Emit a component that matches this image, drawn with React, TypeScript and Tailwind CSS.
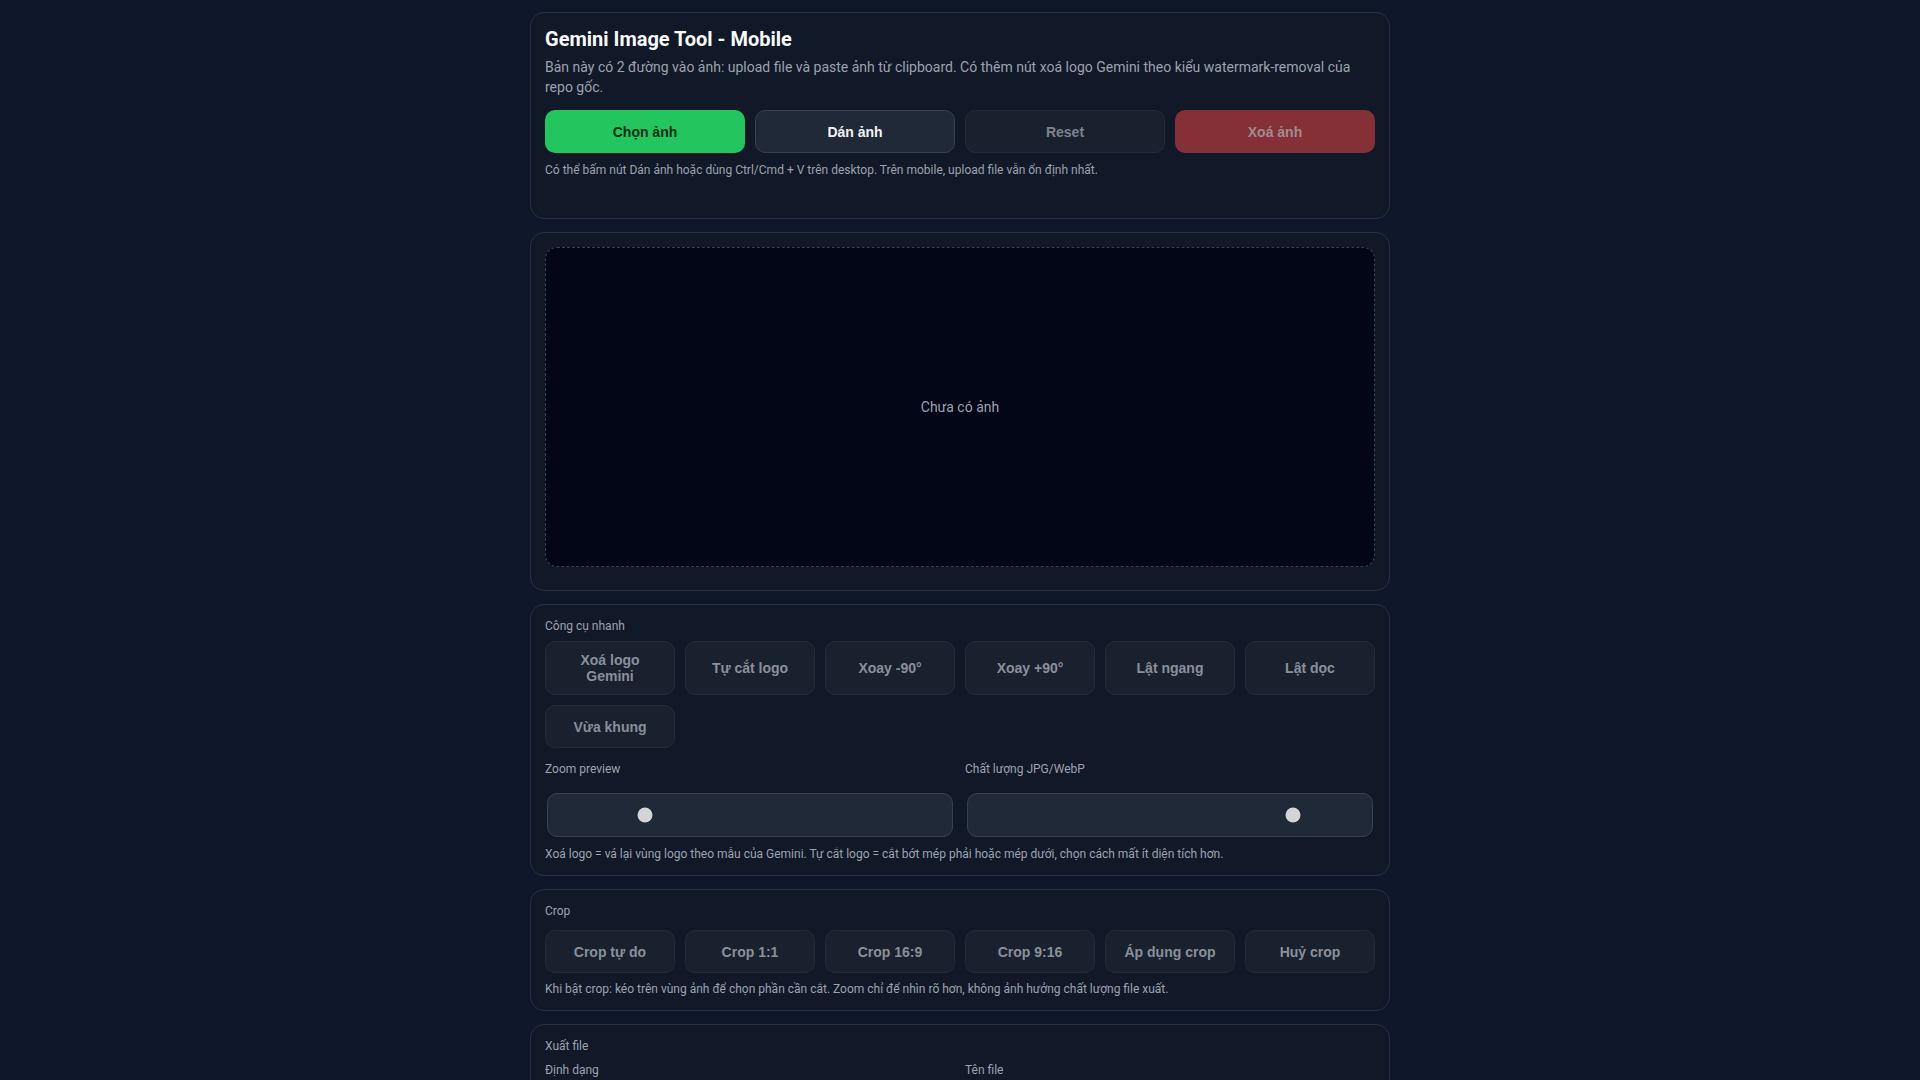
import { useState } from 'react'

const TOOLS = ['Xoá logo Gemini', 'Tự cắt logo', 'Xoay -90°', 'Xoay +90°', 'Lật ngang', 'Lật dọc', 'Vừa khung']
const CROPS = ['Crop tự do', 'Crop 1:1', 'Crop 16:9', 'Crop 9:16', 'Áp dụng crop', 'Huỷ crop']

const btnFont = { fontFamily: '"Liberation Sans", Arial, sans-serif' }

function Card({ children, className = '' }: { children: React.ReactNode; className?: string }) {
  return (
    <section className={`rounded-[14px] border border-[#283244] bg-[#111827] p-3.5 ${className}`}>
      {children}
    </section>
  )
}

function Label({ children, className = '' }: { children: React.ReactNode; className?: string }) {
  return <div className={`text-xs leading-[14px] text-[#9ca3af] ${className}`}>{children}</div>
}

function GhostButton({ label }: { label: string }) {
  return (
    <button
      disabled
      style={btnFont}
      className="min-h-[43px] rounded-[10px] border border-[#222b3a] bg-[#19212e] px-3 py-2.5 text-sm font-bold leading-4 text-[#8a909b]"
    >
      {label}
    </button>
  )
}

function Slider({ value }: { value: number }) {
  return (
    <div className="relative m-0.5 h-[44px] rounded-[10px] border border-[#374151] bg-[#1f2937]">
      {/* thumb */}
      <span
        className="absolute top-1/2 h-[15px] w-[15px] -translate-x-1/2 -translate-y-1/2 rounded-full bg-[#d4d4d6]"
        style={{ left: `${value}%` }}
      />
    </div>
  )
}

export default function App() {
  const [zoom] = useState(23.9)
  const [quality] = useState(80.5)

  return (
    <div
      className="min-h-screen bg-[#0f172a] pt-3 text-[#e5e7eb]"
      style={{ fontFamily: 'Roboto, "Noto Sans", sans-serif' }}
    >
      <div className="mx-auto flex max-w-[860px] flex-col gap-[13px]">
        {/* Header */}
        <Card>
          <h1 className="text-xl font-bold leading-6 text-[#f9fafb]">Gemini Image Tool - Mobile</h1>
          <p className="mt-1.5 text-sm leading-5 text-[#9ca3af]">
            Bản này có 2 đường vào ảnh: upload file và paste ảnh từ clipboard. Có thêm nút xoá logo Gemini theo kiểu
            watermark-removal của repo gốc.
          </p>
          <div className="mt-[13px] grid grid-cols-4 gap-2.5">
            <button
              style={btnFont}
              className="min-h-[43px] rounded-[10px] bg-[#22c55e] text-sm font-bold text-[#052e16]"
            >
              Chọn ảnh
            </button>
            <button
              style={btnFont}
              className="min-h-[43px] rounded-[10px] border border-[#374151] bg-[#1f2937] text-sm font-bold text-[#f3f4f6]"
            >
              Dán ảnh
            </button>
            <button
              disabled
              style={btnFont}
              className="min-h-[43px] rounded-[10px] border border-[#222b3a] bg-[#19212e] text-sm font-bold text-[#7d838e]"
            >
              Reset
            </button>
            <button
              disabled
              style={btnFont}
              className="min-h-[43px] rounded-[10px] bg-[#852f37] text-sm font-bold text-[#9d8d91]"
            >
              Xoá ảnh
            </button>
          </div>
          <Label className="mt-2.5">
            Có thể bấm nút Dán ảnh hoặc dùng Ctrl/Cmd + V trên desktop. Trên mobile, upload file vẫn ổn định nhất.
          </Label>
          <div className="mt-2.5 min-h-[17px]" />
        </Card>

        {/* Preview */}
        <Card>
          <div className="mb-[9px] flex h-[320px] items-center justify-center rounded-xl border border-dashed border-[#334155] bg-[#020617]">
            <span className="text-sm text-[#9ca3af]">Chưa có ảnh</span>
          </div>
        </Card>

        {/* Quick tools */}
        <Card>
          <Label className="mb-2">Công cụ nhanh</Label>
          <div className="grid grid-cols-6 gap-2.5">
            {TOOLS.map(t => (
              <GhostButton key={t} label={t} />
            ))}
          </div>
          <div className="mt-[14px] grid grid-cols-2 gap-2.5">
            <div>
              <Label className="mb-[17px]">Zoom preview</Label>
              <Slider value={zoom} />
            </div>
            <div>
              <Label className="mb-[17px]">Chất lượng JPG/WebP</Label>
              <Slider value={quality} />
            </div>
          </div>
          <Label className="mt-2">
            Xoá logo = vá lại vùng logo theo mẫu của Gemini. Tự cắt logo = cắt bớt mép phải hoặc mép dưới, chọn cách mất ít
            diện tích hơn.
          </Label>
        </Card>

        {/* Crop */}
        <Card>
          <Label className="mb-3">Crop</Label>
          <div className="grid grid-cols-6 gap-2.5">
            {CROPS.map(c => (
              <GhostButton key={c} label={c} />
            ))}
          </div>
          <Label className="mt-[9px]">
            Khi bật crop: kéo trên vùng ảnh để chọn phần cần cắt. Zoom chỉ để nhìn rõ hơn, không ảnh hưởng chất lượng file
            xuất.
          </Label>
        </Card>

        {/* Export */}
        <Card className="mb-6">
          <Label className="mb-2.5">Xuất file</Label>
          <div className="grid grid-cols-2 gap-2.5">
            <div>
              <Label className="mb-2">Định dạng</Label>
              <select
                className="h-[43px] w-full rounded-[10px] border border-[#374151] bg-[#1f2937] px-3 text-sm text-[#f3f4f6]"
                defaultValue="png"
              >
                <option value="png">PNG</option>
                <option value="jpg">JPG</option>
                <option value="webp">WebP</option>
              </select>
            </div>
            <div>
              <Label className="mb-2">Tên file</Label>
              <input
                className="h-[43px] w-full rounded-[10px] border border-[#374151] bg-[#1f2937] px-3 text-sm text-[#f3f4f6]"
                defaultValue="gemini-edited"
              />
            </div>
          </div>
          <button
            disabled
            style={btnFont}
            className="mt-2.5 min-h-[43px] w-full rounded-[10px] bg-[#15803d] text-sm font-bold text-[#052e16]"
          >
            Tải ảnh xuống
          </button>
        </Card>
      </div>
    </div>
  )
}
